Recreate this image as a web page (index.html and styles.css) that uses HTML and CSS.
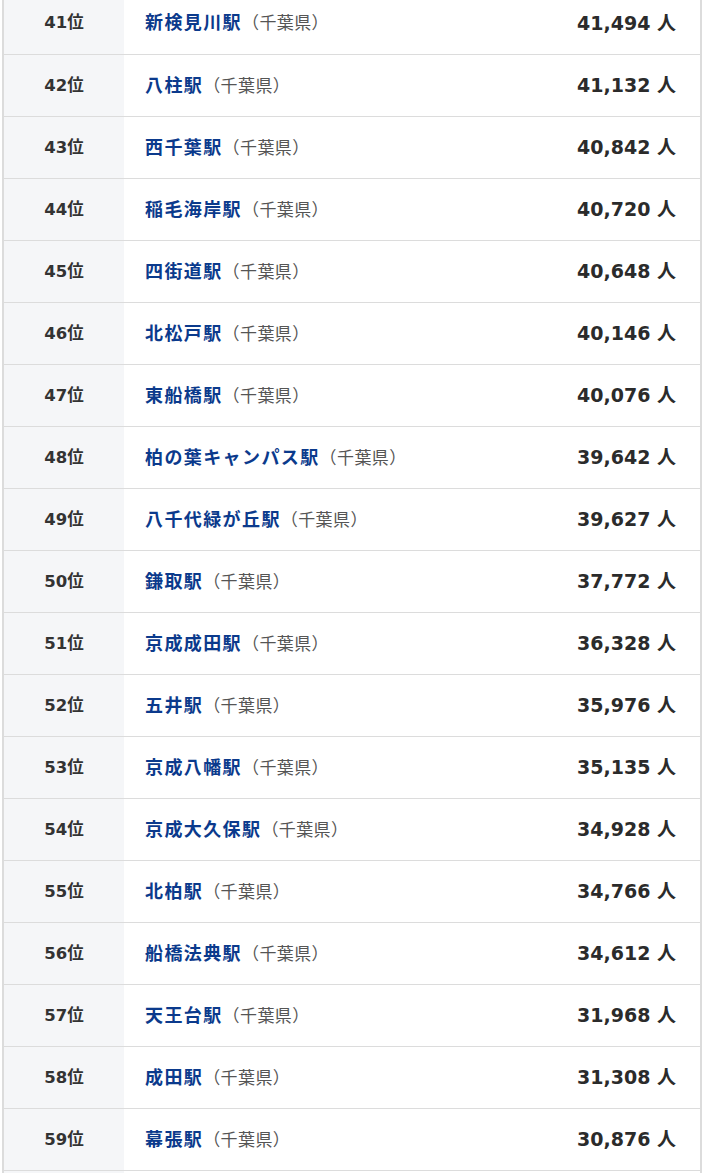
FILE: index.html
```html
<!DOCTYPE html>
<html lang="ja">
<head>
<meta charset="utf-8">
<title>駅ランキング</title>
<link rel="stylesheet" href="styles.css">
</head>
<body>
<div class="frame">
<table class="rank-table">
<tbody>
<tr><td class="rank">41位</td><td class="station"><a class="name" href="#">新検見川駅</a><span class="pref">（千葉県）</span></td><td class="count">41,494 人</td></tr>
<tr><td class="rank">42位</td><td class="station"><a class="name" href="#">八柱駅</a><span class="pref">（千葉県）</span></td><td class="count">41,132 人</td></tr>
<tr><td class="rank">43位</td><td class="station"><a class="name" href="#">西千葉駅</a><span class="pref">（千葉県）</span></td><td class="count">40,842 人</td></tr>
<tr><td class="rank">44位</td><td class="station"><a class="name" href="#">稲毛海岸駅</a><span class="pref">（千葉県）</span></td><td class="count">40,720 人</td></tr>
<tr><td class="rank">45位</td><td class="station"><a class="name" href="#">四街道駅</a><span class="pref">（千葉県）</span></td><td class="count">40,648 人</td></tr>
<tr><td class="rank">46位</td><td class="station"><a class="name" href="#">北松戸駅</a><span class="pref">（千葉県）</span></td><td class="count">40,146 人</td></tr>
<tr><td class="rank">47位</td><td class="station"><a class="name" href="#">東船橋駅</a><span class="pref">（千葉県）</span></td><td class="count">40,076 人</td></tr>
<tr><td class="rank">48位</td><td class="station"><a class="name" href="#">柏の葉キャンパス駅</a><span class="pref">（千葉県）</span></td><td class="count">39,642 人</td></tr>
<tr><td class="rank">49位</td><td class="station"><a class="name" href="#">八千代緑が丘駅</a><span class="pref">（千葉県）</span></td><td class="count">39,627 人</td></tr>
<tr><td class="rank">50位</td><td class="station"><a class="name" href="#">鎌取駅</a><span class="pref">（千葉県）</span></td><td class="count">37,772 人</td></tr>
<tr><td class="rank">51位</td><td class="station"><a class="name" href="#">京成成田駅</a><span class="pref">（千葉県）</span></td><td class="count">36,328 人</td></tr>
<tr><td class="rank">52位</td><td class="station"><a class="name" href="#">五井駅</a><span class="pref">（千葉県）</span></td><td class="count">35,976 人</td></tr>
<tr><td class="rank">53位</td><td class="station"><a class="name" href="#">京成八幡駅</a><span class="pref">（千葉県）</span></td><td class="count">35,135 人</td></tr>
<tr><td class="rank">54位</td><td class="station"><a class="name" href="#">京成大久保駅</a><span class="pref">（千葉県）</span></td><td class="count">34,928 人</td></tr>
<tr><td class="rank">55位</td><td class="station"><a class="name" href="#">北柏駅</a><span class="pref">（千葉県）</span></td><td class="count">34,766 人</td></tr>
<tr><td class="rank">56位</td><td class="station"><a class="name" href="#">船橋法典駅</a><span class="pref">（千葉県）</span></td><td class="count">34,612 人</td></tr>
<tr><td class="rank">57位</td><td class="station"><a class="name" href="#">天王台駅</a><span class="pref">（千葉県）</span></td><td class="count">31,968 人</td></tr>
<tr><td class="rank">58位</td><td class="station"><a class="name" href="#">成田駅</a><span class="pref">（千葉県）</span></td><td class="count">31,308 人</td></tr>
<tr><td class="rank">59位</td><td class="station"><a class="name" href="#">幕張駅</a><span class="pref">（千葉県）</span></td><td class="count">30,876 人</td></tr>
<tr><td class="rank"></td><td class="station"></td><td class="count"></td></tr>
</tbody>
</table>
</div>
</body>
</html>
```
FILE: styles.css
```css
html, body {
  margin: 0;
  padding: 0;
  background: #fff;
}
body {
  font-family: "DejaVu Sans", "Noto Sans CJK JP", sans-serif;
  color: #333;
  overflow: hidden;
}
.frame {
  width: 696px;
  margin: -8px 0 0 2px;
  border-left: 2px solid #dcdcdc;
  border-right: 2px solid #dcdcdc;
}
.rank-table {
  width: 100%;
  border-collapse: collapse;
  table-layout: fixed;
}
.rank-table td {
  border-bottom: 1px solid #dcdcdc;
  padding: 0 0 3px 0;
  vertical-align: middle;
  height: 62px;
  box-sizing: border-box;
}
.rank {
  width: 120px;
  background: #f5f6f8;
  text-align: center;
  font-weight: bold;
  font-size: 16.5px;
  color: #333;
}
.station {
  padding-left: 21px !important;
  white-space: nowrap;
}
.name {
  color: #0b3a8c;
  text-decoration: none;
  font-weight: bold;
  font-size: 18px;
  letter-spacing: 1.4px;
}
.pref {
  color: #555;
  font-size: 17px;
  letter-spacing: 0.4px;
  font-weight: normal;
}
.count {
  width: 200px;
  text-align: right;
  padding-right: 24px !important;
  font-weight: bold;
  font-size: 19px;
  color: #2b2b2b;
  white-space: nowrap;
}
```
